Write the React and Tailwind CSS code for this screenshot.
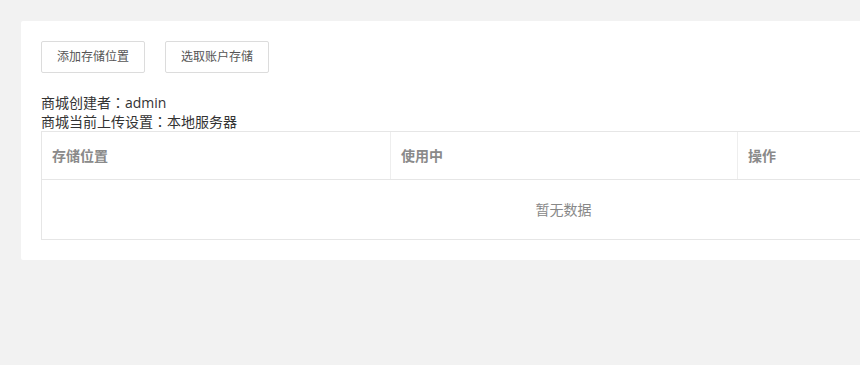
import React from 'react';

const columns = ['存储位置', '使用中', '操作'];

// fullwidth colon, centred like the reference
const Colon = () => (
  <span style={{ fontFamily: '"Noto Sans CJK TC", sans-serif' }}>：</span>
);

const App = () => {
  return (
    <div
      className="w-[860px] h-[365px] overflow-hidden bg-[#f2f2f2] pt-[21px] pl-[21px]"
      style={{ fontFamily: '"Open Sans", "Noto Sans CJK SC", sans-serif' }}
    >
      <div className="w-[1085px] bg-white rounded-[2px] p-5">
        {/* Actions */}
        <div className="flex gap-[20px]">
          <button className="h-[32px] w-[104px] border border-[#dcdcdc] rounded-[2px] bg-white text-[12px] text-[#555] leading-none">
            添加存储位置
          </button>
          <button className="h-[32px] w-[104px] border border-[#dcdcdc] rounded-[2px] bg-white text-[12px] text-[#555] leading-none">
            选取账户存储
          </button>
        </div>

        <div className="mt-[20px] text-[14px] leading-[19px] text-[#333]">
          <p>商城创建者<Colon />admin</p>
          <p>商城当前上传设置<Colon />本地服务器</p>
        </div>

        {/* Table */}
        <div className="w-[1045px] border border-[#e6e6e6]">
          <div className="grid grid-cols-[349px_347px_1fr] h-[48px] border-b border-[#e6e6e6]">
            {columns.map((col, i) => (
              <div
                key={col}
                className={`flex items-center px-[10px] text-[14px] font-bold text-[#8a8a8a] ${i < 2 ? 'border-r border-[#eeeeee]' : ''}`}
              >
                {col}
              </div>
            ))}
          </div>
          <div className="h-[59px] flex items-center justify-center text-[14px] text-[#888]">
            暂无数据
          </div>
        </div>
      </div>
    </div>
  );
};

export default App;
